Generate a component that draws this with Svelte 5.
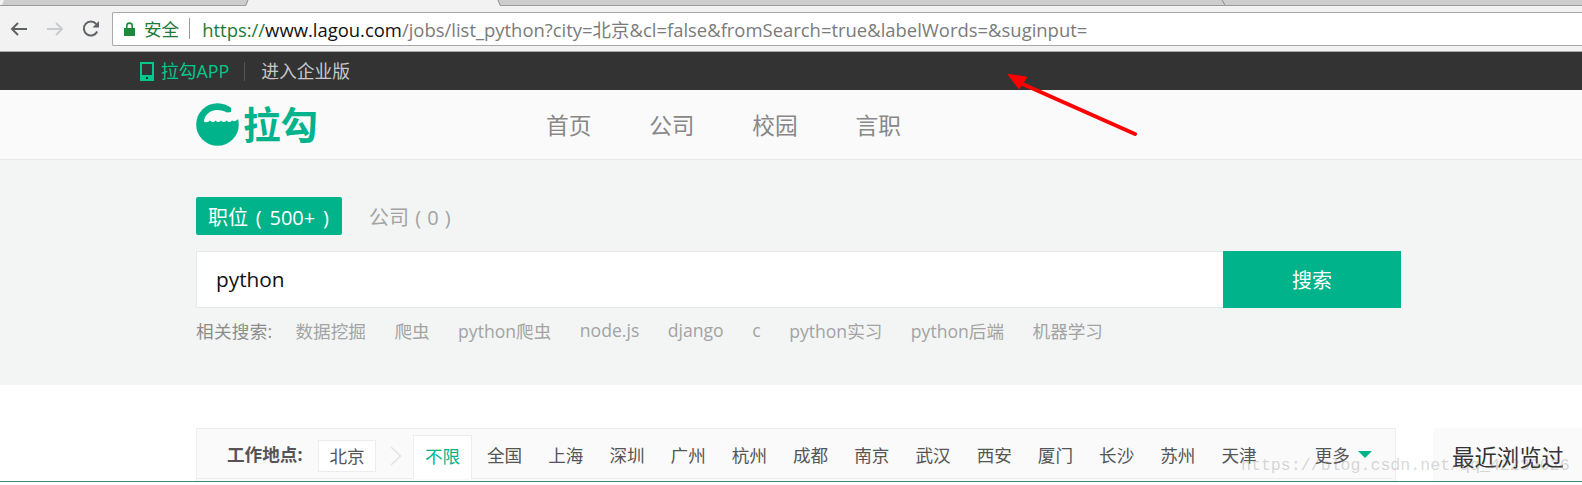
<script lang="ts">
  const navItems = ['首页', '公司', '校园', '言职'];
  const related = ['数据挖掘', '爬虫', 'python爬虫', 'node.js', 'django', 'c', 'python实习', 'python后端', '机器学习'];
  const cities = ['全国', '上海', '深圳', '广州', '杭州', '成都', '南京', '武汉', '西安', '厦门', '长沙', '苏州', '天津'];
</script>

<div class="page">
  <div class="screen">
    <svg class="tabstrip" width="1582" height="6" viewBox="0 0 1582 6">
      <rect width="1582" height="6" fill="#cdcdcd" />
      <rect y="5" width="1582" height="1" fill="#9c9c9c" />
      <path d="M0 0H4L2 5H0Z" fill="#f2f2f2" />
      <path d="M246 6L248 0H498L500 6Z" fill="#f2f2f2" />
      <path d="M246 5L248 0M498 0L500 5M1222 0L1225 5" stroke="#8f8f8f" fill="none" />
    </svg>

    <div class="toolbar">
      <div class="nav-icons">
        <svg width="18" height="16" viewBox="0 0 18 16"><path d="M17 8H2M8 2L2 8l6 6" fill="none" stroke="#5f6368" stroke-width="2" /></svg>
        <svg width="18" height="16" viewBox="0 0 18 16"><path d="M1 8h15M10 2l6 6-6 6" fill="none" stroke="#c9cbcd" stroke-width="2" /></svg>
        <svg width="18" height="18" viewBox="0 0 18 18"><path d="M15.2 11.5A7 7 0 1 1 14.2 4" fill="none" stroke="#5f6368" stroke-width="2" /><path d="M10.5 7.5H17V1Z" fill="#5f6368" /></svg>
      </div>
      <div class="omnibox">
        <svg class="lock" width="11" height="14" viewBox="0 0 11 14"><path d="M0 6h11v8H0Z" fill="#1b8a3a" /><path d="M2.8 6V3.8a2.7 2.7 0 0 1 5.4 0V6" fill="none" stroke="#1b8a3a" stroke-width="1.6" /></svg>
        <span class="secure">安全</span>
        <span class="omni-sep"></span>
        <span class="url"><span class="scheme">https://</span><span class="host">www.lagou.com</span>/jobs/list_python?city=北京&amp;cl=false&amp;fromSearch=true&amp;labelWords=&amp;suginput=</span>
      </div>
    </div>

    <div class="topbar">
      <svg class="phone" width="14" height="19" viewBox="0 0 14 19">
        <path d="M1 1h12v17H1Z" fill="none" stroke="#00c98d" stroke-width="2" />
        <path d="M1 13h12v5H1Z" fill="#00c98d" />
        <rect x="6" y="15" width="2" height="2" fill="#333" />
      </svg>
      <span class="app">拉勾APP</span>
      <span class="top-sep"></span>
      <span class="biz">进入企业版</span>
    </div>

    <header class="header">
      <div class="logo">
        <svg width="43" height="43" viewBox="0 0 43 43">
          <circle cx="21.5" cy="21.5" r="21.3" fill="#00b38a" />
          <path d="M8 19C8 12 14 7 21 7c4 0 7.500 1 10 2.500L35 9V0h9v16l-2.500 .5q-2.500 3-5.500 1q-2.500 3-5.500 0q-2.500 3-5.500 0q-2.500 3-5.500 0q-2.500 3-5.500 0q-2 2.500-5 1.500z" fill="#fafafa" />
          <circle cx="32.5" cy="6.300" r="2.6" fill="#00b38a" />
        </svg>
        <span class="logo-text">拉勾</span>
      </div>
      <nav class="nav">
        {#each navItems as item}
          <span>{item}</span>
        {/each}
      </nav>
    </header>

    <section class="search">
      <div class="tabs">
        <span class="tab active">职位 ( 500+ )</span>
        <span class="tab">公司 ( 0 )</span>
      </div>
      <div class="search-box">
        <div class="input">python</div>
        <div class="btn">搜索</div>
      </div>
      <div class="related">
        <span class="related-label">相关搜索:</span>
        {#each related as r}
          <span class="related-item">{r}</span>
        {/each}
      </div>
    </section>

    <section class="lower">
      <div class="filter">
        <div class="filter-row">
          <span class="filter-label">工作地点:</span>
          <span class="current">北京</span>
          <svg class="chevron" width="12" height="20" viewBox="0 0 12 20"><path d="M1 1l9.500 9L1 19" fill="none" stroke="#e4e4e4" stroke-width="1.6" /></svg>
          <span class="unlimited">不限</span>
          <div class="cities">
            {#each cities as c}
              <span>{c}</span>
            {/each}
          </div>
          <span class="more">更多</span>
          <span class="caret"></span>
        </div>
      </div>
      <aside class="recent">最近浏览过</aside>
    </section>

    <svg class="arrow" width="140" height="70" viewBox="0 0 140 70">
      <path d="M14 8L131 60" stroke="#ff0000" stroke-width="4" stroke-linecap="round" />
      <path d="M5 1L22 3.500L15 14Z" fill="#ff0000" stroke="#ff0000" stroke-width="2" stroke-linejoin="round" />
    </svg>
    <span class="watermark">https://blog.csdn.net/qq_42239026</span>
  </div>
  <div class="scan-line"></div>
</div>

<style>
  :global(body) {
    margin: 0;
    background: #fff;
    overflow: hidden;
  }

  .page {
    width: 1582px;
    height: 485px;
    font-family: "Open Sans", "Noto Sans CJK SC", sans-serif;
    background: #fff;
    overflow: hidden;
  }

  .screen {
    position: relative;
    height: 481px;
    overflow: hidden;
  }

  .scan-line {
    height: 1px;
    background: #3f8a6f;
  }

  .tabstrip {
    display: block;
  }

  .toolbar {
    display: flex;
    align-items: center;
    height: 45px;
    background: #f2f2f2;
    border-bottom: 1px solid #a8a8a8;
    box-sizing: content-box;
  }

  .nav-icons {
    display: flex;
    align-items: center;
    gap: 18px;
    padding-left: 10px;
    width: 112px;
    box-sizing: border-box;
  }

  .omnibox {
    flex: 1;
    display: flex;
    align-items: center;
    height: 34px;
    padding-left: 11px;
    background: #fff;
    border: 1px solid #a9a9a9;
    border-right: none;
    border-radius: 2px 0 0 2px;
    box-sizing: border-box;
  }

  .secure {
    margin-left: 9px;
    font-size: 17.6px;
    color: #1b7a37;
  }

  .omni-sep {
    width: 1px;
    height: 21px;
    margin: 0 12px 0 10px;
    background: #9a9a9a;
  }

  .url {
    font-size: 18.45px;
    color: #7b7b7b;
    white-space: nowrap;
  }

  .scheme {
    color: #1b7a37;
  }

  .host {
    color: #111;
  }

  .topbar {
    display: flex;
    align-items: center;
    height: 38px;
    padding-left: 140px;
    background: #333;
    font-size: 17.8px;
  }

  .phone {
    margin-right: 7px;
  }

  .app {
    color: #00c98d;
    margin-bottom: 2px;
  }

  .top-sep {
    width: 1px;
    height: 19px;
    margin: 0 16px 0 15px;
    background: #555;
  }

  .biz {
    color: #c8c8c8;
    margin-bottom: 2px;
  }

  .header {
    display: flex;
    align-items: center;
    height: 69px;
    padding-left: 196px;
    background: #fafafa;
    border-bottom: 1px solid #e8e8e8;
  }

  .logo {
    display: flex;
    align-items: center;
    gap: 4px;
    width: 350px;
  }

  .logo-text {
    font-size: 37.5px;
    font-weight: 700;
    line-height: 43px;
    color: #00b38a;
  }

  .nav {
    display: flex;
    gap: 57.8px;
    font-size: 22.7px;
    color: #888;
  }

  .search {
    height: 225px;
    padding: 37px 0 0 196px;
    box-sizing: border-box;
    background: #f2f5f4;
  }

  .tabs {
    display: flex;
    align-items: center;
    gap: 27px;
    height: 38px;
  }

  .tab {
    font-size: 20px;
    word-spacing: 1px;
    color: #a3a3a3;
  }

  .tab.active {
    display: flex;
    align-items: center;
    height: 38px;
    padding: 0 13px 0 12px;
    border-radius: 2px;
    word-spacing: 2.6px;
    background: #00b38a;
    color: #fff;
  }

  .search-box {
    display: flex;
    width: 1205px;
    height: 57px;
    margin-top: 16px;
  }

  .input {
    flex: 1;
    display: flex;
    align-items: center;
    padding: 0 0 2px 19px;
    background: #fff;
    border: 1px solid #e8e8e8;
    border-right: none;
    font-size: 20.8px;
    color: #111;
  }

  .btn {
    display: flex;
    align-items: center;
    justify-content: center;
    width: 178px;
    background: #00b38a;
    color: #fff;
    font-size: 20px;
  }

  .related {
    display: flex;
    align-items: center;
    gap: 28.5px;
    height: 24px;
    margin-top: 10px;
    font-size: 17.6px;
    color: #a3a3a3;
  }

  .related-label {
    color: #8c8c8c;
    letter-spacing: 0.3px;
    margin-right: -5.5px;
  }

  .lower {
    display: flex;
    gap: 37px;
    padding: 43px 0 0 196px;
  }

  .filter {
    width: 1200px;
    height: 53px;
    box-sizing: border-box;
    background: #fafafa;
    border: 1px solid #ededed;
    border-bottom: none;
  }

  .filter-row {
    display: flex;
    align-items: center;
    height: 49px;
    padding-left: 30px;
    margin-right: 2px;
    border-bottom: 1px solid #ededed;
    font-size: 17.6px;
    color: #555;
  }

  .filter-label {
    width: 91px;
    font-weight: 700;
    white-space: nowrap;
  }

  .current {
    display: flex;
    align-items: center;
    justify-content: center;
    width: 58px;
    height: 32px;
    padding-bottom: 2px;
    box-sizing: border-box;
    background: #fff;
    border: 1px solid #ededed;
    margin-top: 5px;
  }

  .chevron {
    margin: 4px 11px 0 14px;
  }

  .unlimited {
    display: flex;
    align-items: center;
    justify-content: center;
    align-self: flex-start;
    width: 59px;
    height: 44px;
    margin-top: 6px;
    padding-bottom: 4px;
    box-sizing: border-box;
    background: #fff;
    border: 1px solid #ededed;
    border-bottom: none;
    color: #00b38a;
  }

  .cities {
    display: flex;
    gap: 26px;
    margin-left: 15px;
    margin-top: 1px;
  }

  .more {
    margin-left: 58px;
    margin-top: 1px;
  }

  .caret {
    width: 0;
    height: 0;
    margin: 1px 0 0 8px;
    border-left: 7px solid transparent;
    border-right: 7px solid transparent;
    border-top: 7px solid #00b38a;
  }

  .recent {
    flex: 1;
    height: 53px;
    padding-left: 19px;
    background: #fafafa;
    font-size: 22.4px;
    line-height: 60px;
    color: #333;
  }

  .arrow {
    position: absolute;
    left: 1004px;
    top: 74px;
  }

  .watermark {
    position: absolute;
    left: 1241px;
    top: 456px;
    font-family: "Liberation Mono", monospace;
    font-size: 16.6px;
    color: rgba(120, 120, 120, 0.3);
    white-space: nowrap;
  }
</style>
